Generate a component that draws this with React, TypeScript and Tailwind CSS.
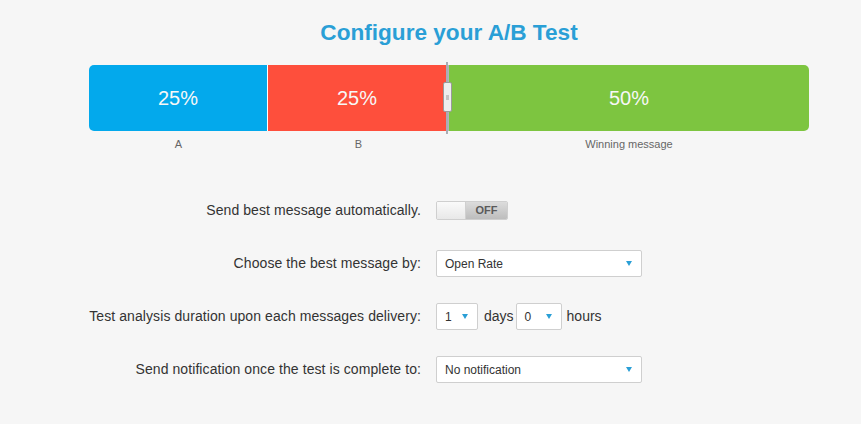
import React from 'react';

function Arrow() {
    return <span className="w-0 h-0 border-l-[3px] border-r-[3px] border-t-[5px] border-l-transparent border-r-transparent border-t-[#2a9fd6]" />;
}

function SelectBox({ value, width }: { value: string; width: string }) {
    return (
        <div className={`${width} h-[27px] flex items-center justify-between bg-white border border-[#cfcfcf] rounded-[2px] pl-[8px] pr-[9px] text-[12px] text-[#333]`}>
            <span>{value}</span>
            <Arrow />
        </div>
    );
}

export default function App() {
    return (
        <div className="min-h-[424px] bg-[#f6f6f6] font-['Liberation_Sans',Arial,sans-serif] pt-[20px]">
            <div className="ml-[89px] w-[720px]">
                <h1 className="text-center text-[22.6px] leading-[26px] font-bold text-[#2a9fd6]">Configure your A/B Test</h1>

                {/* split bar */}
                <div className="relative mt-[19px]">
                    <div className="flex h-[66px] rounded-[5px] overflow-hidden text-[20px] text-[#f7f7f7]">
                        <div className="w-[178px] bg-[#03a9ec] flex items-center justify-center">25%</div>
                        <div className="w-[1px] bg-white" />
                        <div className="w-[178px] bg-[#fe4f3c] flex items-center justify-center">25%</div>
                        <div className="w-[3px] bg-[#b0b4bb]" />
                        <div className="flex-1 bg-[#7dc540] flex items-center justify-center">50%</div>
                    </div>
                    <div className="absolute left-[357px] top-[-3px] w-[2px] h-[72px] bg-[#a9adb5]" />
                    <div className="absolute left-[354px] top-[17px] w-[9px] h-[30px] bg-[#eeeeee] border border-[#9a9a9a] rounded-[2px] flex items-center justify-center">
                        <span className="w-[3px] h-[5px] bg-[#c4c4c4]" />
                    </div>
                </div>
                <div className="flex mt-[6px] text-[11px] leading-[14px] text-[#666]">
                    <div className="w-[179px] text-center">A</div>
                    <div className="w-[181px] text-center">B</div>
                    <div className="flex-1 text-center">Winning message</div>
                </div>

                {/* settings */}
                <div className="mt-[46px] grid grid-cols-[332px_1fr] gap-x-[15px] gap-y-[26px] text-[14px] text-[#333]">
                    <div className="h-[27px] flex items-center justify-end tracking-[0.08px]">Send best message automatically.</div>
                    <div className="h-[27px] flex items-center">
                        <div className="flex w-[72px] h-[19px] border border-[#cfcfcf] rounded-[2px] overflow-hidden">
                            <div className="w-[29px] bg-gradient-to-b from-[#fafafa] to-[#e8e8e8] border-r border-[#d0d0d0]" />
                            <div className="flex-1 bg-gradient-to-b from-[#dcdcdc] to-[#bdbdbd] flex items-center justify-center text-[11px] font-bold text-[#5a5a5a]">OFF</div>
                        </div>
                    </div>

                    <div className="h-[27px] flex items-center justify-end tracking-[0.08px]">Choose the best message by:</div>
                    <div className="h-[27px] flex items-center">
                        <SelectBox value="Open Rate" width="w-[206px]" />
                    </div>

                    <div className="h-[27px] flex items-center justify-end tracking-[0.08px]">Test analysis duration upon each messages delivery:</div>
                    <div className="h-[27px] flex items-center">
                        <SelectBox value="1" width="w-[42px]" />
                        <span className="ml-[6px] mr-[2px]">days</span>
                        <SelectBox value="0" width="w-[46px]" />
                        <span className="ml-[5px]">hours</span>
                    </div>

                    <div className="h-[27px] flex items-center justify-end tracking-[0.08px]">Send notification once the test is complete to:</div>
                    <div className="h-[27px] flex items-center">
                        <SelectBox value="No notification" width="w-[206px]" />
                    </div>
                </div>
            </div>
        </div>
    );
}
